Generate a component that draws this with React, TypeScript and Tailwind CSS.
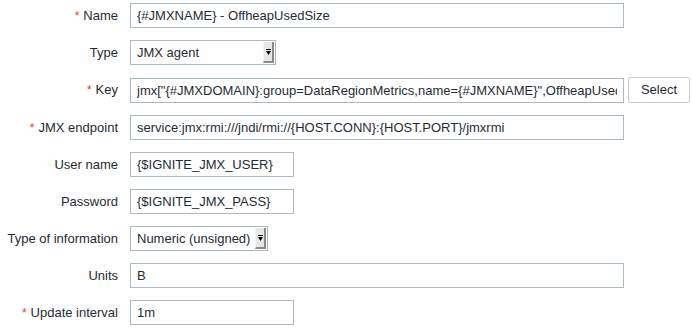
import React from "react";

type Row = {
  label: string;
  required?: boolean;
  kind: "input" | "select";
  value: string;
  width: string;
  button?: string;
};

const rows: Row[] = [
  { label: "Name", required: true, kind: "input", value: "{#JMXNAME} - OffheapUsedSize", width: "w-[494px]" },
  { label: "Type", kind: "select", value: "JMX agent", width: "w-[146px]" },
  {
    label: "Key",
    required: true,
    kind: "input",
    value: 'jmx["{#JMXDOMAIN}:group=DataRegionMetrics,name={#JMXNAME}",OffheapUsedSize]',
    width: "w-[494px]",
    button: "Select",
  },
  { label: "JMX endpoint", required: true, kind: "input", value: "service:jmx:rmi:///jndi/rmi://{HOST.CONN}:{HOST.PORT}/jmxrmi", width: "w-[494px]" },
  { label: "User name", kind: "input", value: "{$IGNITE_JMX_USER}", width: "w-[164px]" },
  { label: "Password", kind: "input", value: "{$IGNITE_JMX_PASS}", width: "w-[164px]" },
  { label: "Type of information", kind: "select", value: "Numeric (unsigned)", width: "w-[138px]" },
  { label: "Units", kind: "input", value: "B", width: "w-[494px]" },
  { label: "Update interval", required: true, kind: "input", value: "1m", width: "w-[164px]" },
];

function SelectBox({ value, width }: { value: string; width: string }) {
  return (
    <div className={`${width} h-[25px] flex items-center border border-[#acbbc2] bg-white pl-[6px] pr-[1px]`}>
      <span className="flex-1 whitespace-nowrap overflow-hidden">{value}</span>
      <span className="w-[11px] h-[21px] flex flex-col items-center justify-center bg-[#e6e6e6] border-r-2 border-b-2 border-[#8a8a8a] border-l border-l-[#f4f4f4]">
        <span className="w-[5px] h-[1px] bg-black mb-[1px]" />
        <svg width="5" height="4" viewBox="0 0 5 4">
          <path d="M0 0H5L2.5 4Z" fill="#000" />
        </svg>
      </span>
    </div>
  );
}

export default function App() {
  return (
    <div className="w-[692px] h-[328px] bg-white pt-[3px] text-[13px] text-[#1f2c33] font-['Liberation_Sans',Arial,sans-serif]">
      <div className="grid grid-cols-[118px_1fr] gap-x-[12px] gap-y-[12px]">
        {rows.map((r) => (
          <React.Fragment key={r.label}>
            <div className="h-[25px] flex items-center justify-end whitespace-nowrap">
              {r.required && <span className="text-[#e33734] mr-[4px] text-[12px]">*</span>}
              {r.label}
            </div>
            <div className="flex items-center gap-[4px]">
              {r.kind === "input" ? (
                <input
                  readOnly
                  value={r.value}
                  className={`${r.width} h-[25px] border border-[#acbbc2] bg-white pl-[6px] pr-[6px] text-[#1f2c33] outline-none`}
                />
              ) : (
                <SelectBox value={r.value} width={r.width} />
              )}
              {r.button && (
                <button className="h-[26px] w-[62px] border border-[#c6d0d4] rounded-[2px] bg-white text-[#1f2c33]">
                  {r.button}
                </button>
              )}
            </div>
          </React.Fragment>
        ))}
      </div>
    </div>
  );
}
